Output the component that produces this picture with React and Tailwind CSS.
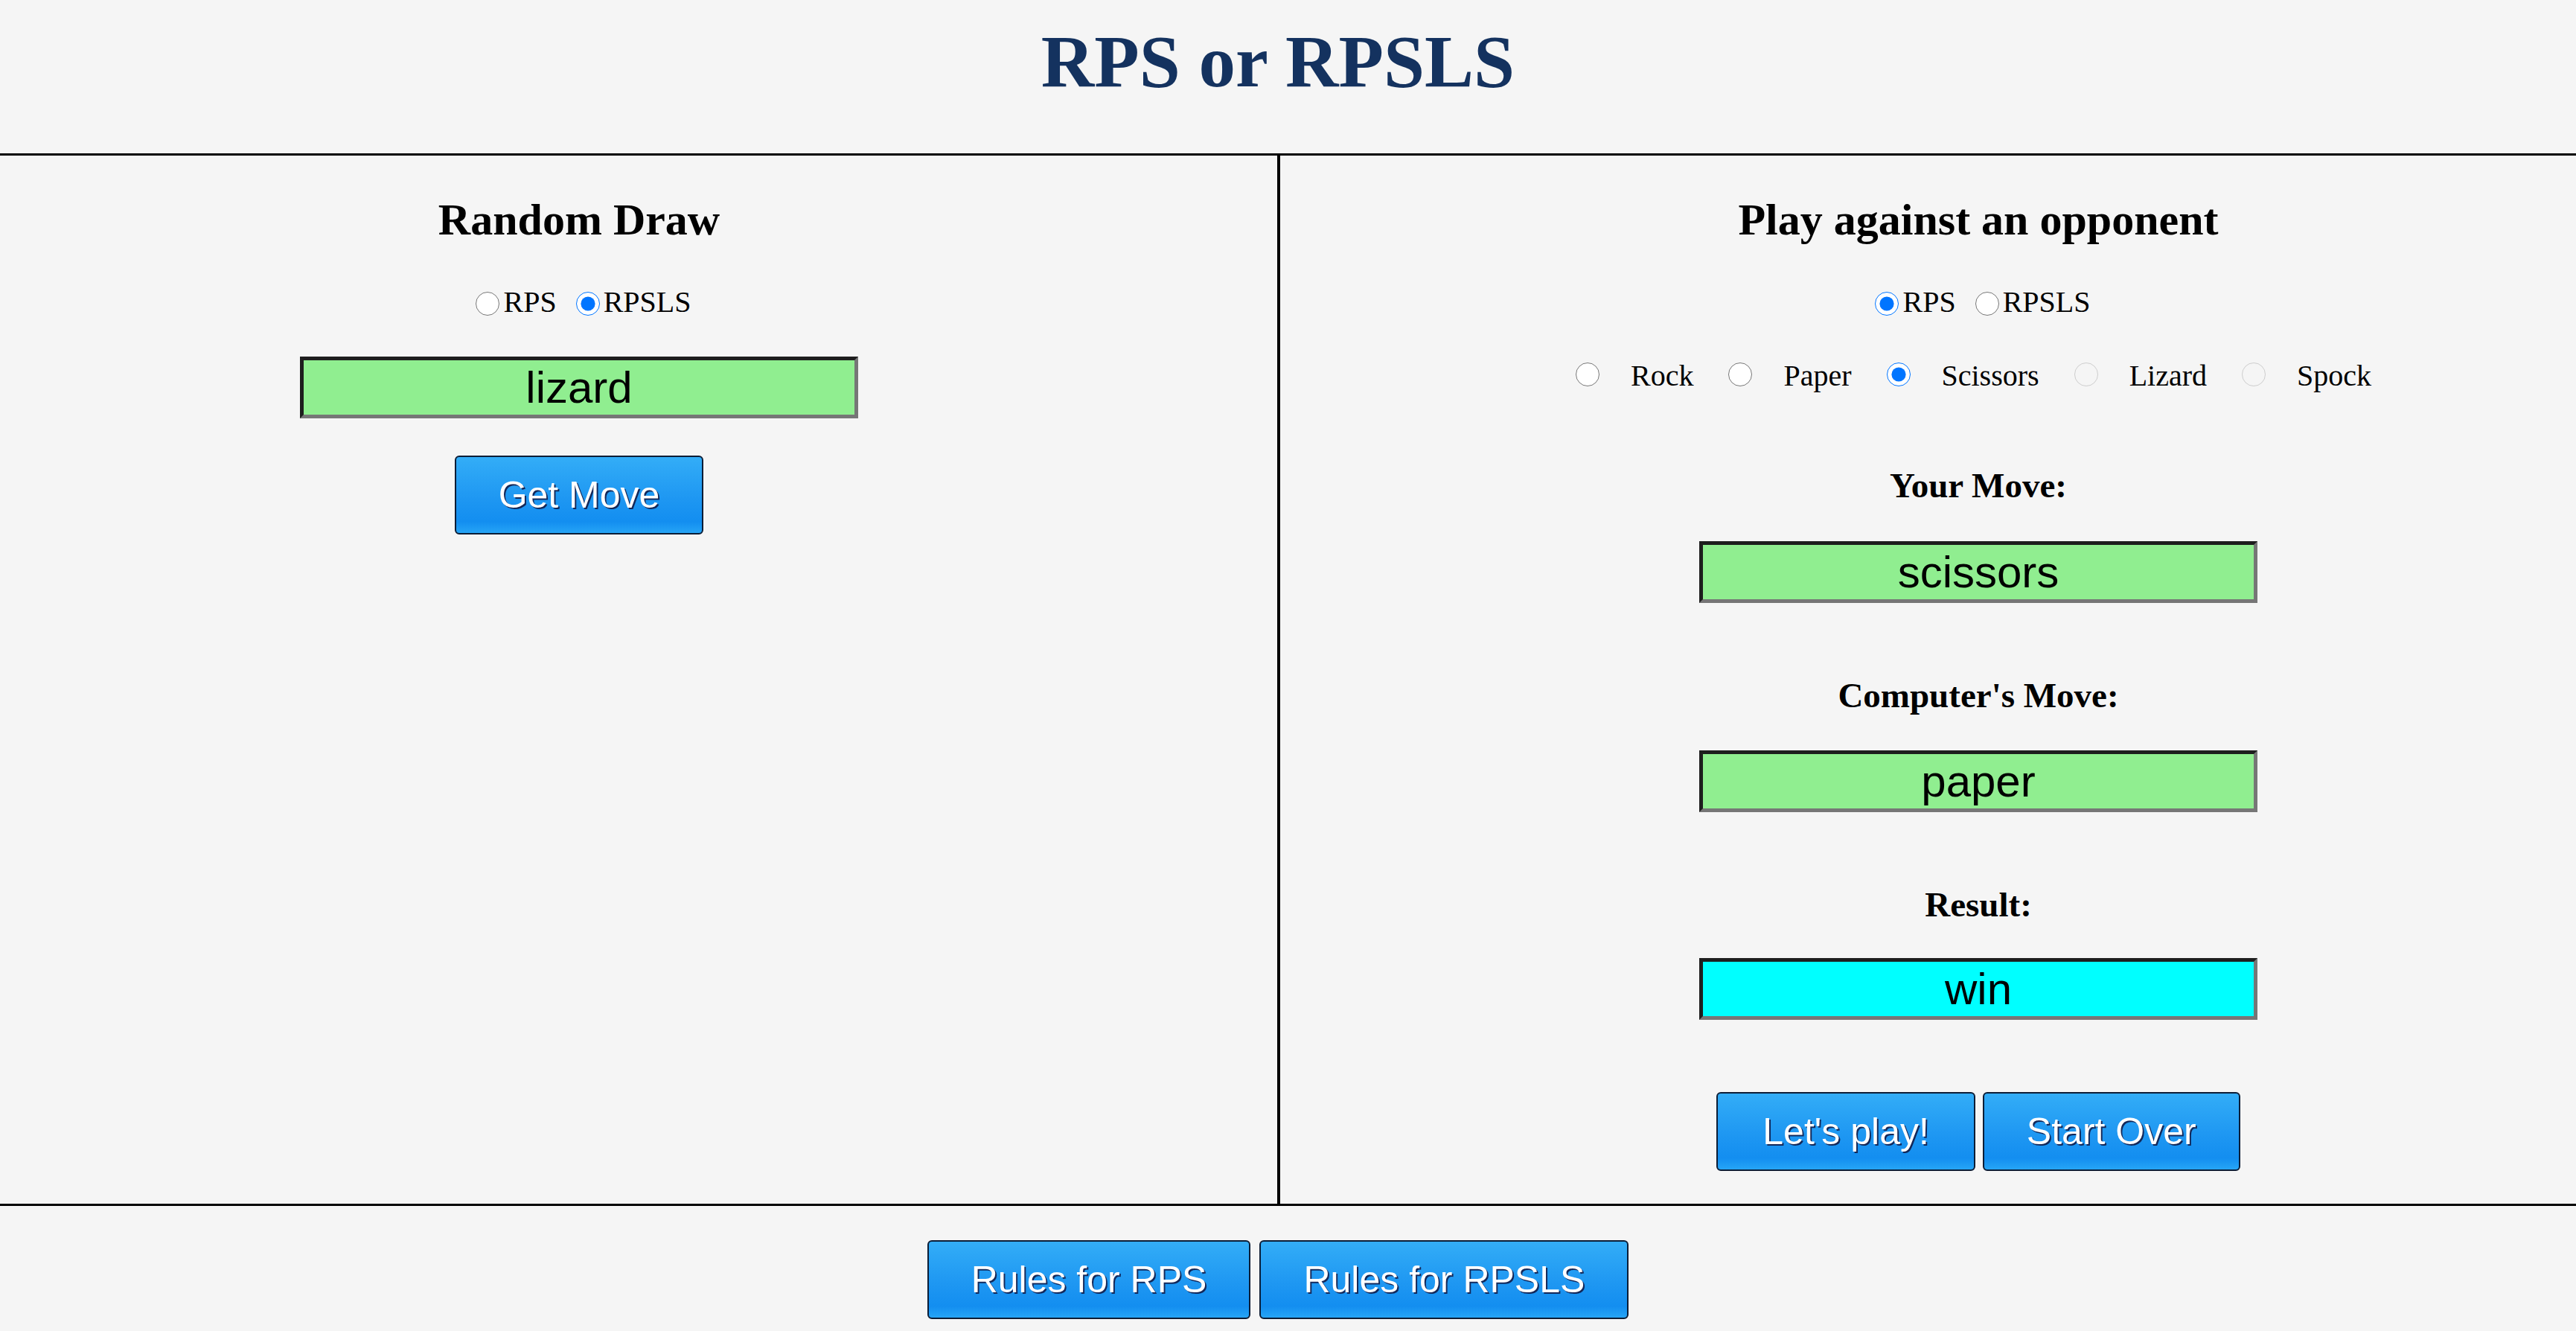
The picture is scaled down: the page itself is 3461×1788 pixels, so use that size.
import React from "react";

const SERIF = "font-['Liberation_Serif','Times_New_Roman',serif]";
const SANS = "font-['Liberation_Sans',Arial,sans-serif]";

function Radio({ name, checked, disabled, className = "" }) {
  return (
    <input
      type="radio"
      name={name}
      defaultChecked={checked}
      disabled={disabled}
      className={"w-[32px] h-[32px] shrink-0 " + className}
    />
  );
}

function Box({ children, bg = "bg-[#90ee90]", className = "" }) {
  return (
    <div
      className={
        "mx-auto w-[750px] h-[83px] border-[5px] border-t-[#1e1e1e] border-l-[#1e1e1e] border-b-[#767676] border-r-[#767676] flex items-center justify-center text-[60px] leading-[69px] text-black " +
        SANS +
        " " +
        bg +
        " " +
        className
      }
    >
      {children}
    </div>
  );
}

function Btn({ children, className = "px-[57px]" }) {
  return (
    <button
      type="button"
      className={
        "h-[106px] border-2 border-[#0c1d36] rounded-[6px] bg-[linear-gradient(to_bottom,#33adf7_0%,#1e97f2_55%,#138ef0_85%,#26a5f6_100%)] text-white text-[50px] leading-[58px] [text-shadow:2px_2px_0_#13285a] " +
        SANS +
        " " +
        className
      }
    >
      {children}
    </button>
  );
}

export default function App() {
  const moves = [
    { label: "Rock" },
    { label: "Paper" },
    { label: "Scissors", checked: true },
    { label: "Lizard", disabled: true },
    { label: "Spock", disabled: true },
  ];

  return (
    <div className={"min-h-screen bg-[#f5f5f5] text-black " + SERIF}>
      <header className="h-[209px] border-b-[3px] border-black pt-[33px] pr-[27px] text-center">
        <h1 className="text-[99px] leading-[99px] font-bold text-[#14325f]">RPS or RPSLS</h1>
      </header>

      <main className="grid grid-cols-[1720px_1fr] h-[1408px]">
        <section className="border-r-[4px] border-black pr-[160px] text-center">
          <h2 className="mt-[56px] text-[60px] leading-[60px] font-bold">Random Draw</h2>
          <div className="mt-[61px] flex justify-center items-start text-[40px] leading-[40px] pl-[12px]">
            <Radio name="draw" className="mt-[6px] mr-[5px]" />
            <span>RPS</span>
            <Radio name="draw" checked className="mt-[6px] ml-[26px] mr-[5px]" />
            <span>RPSLS</span>
          </div>
          <Box className="mt-[53px]">lizard</Box>
          <div className="mt-[50px] flex justify-center">
            <Btn>Get Move</Btn>
          </div>
        </section>

        <section className="pl-[135px] text-center">
          <h2 className="mt-[56px] text-[60px] leading-[60px] font-bold">Play against an opponent</h2>
          <div className="mt-[61px] flex justify-center items-start text-[40px] leading-[40px] pl-[12px]">
            <Radio name="mode" checked className="mt-[6px] mr-[5px]" />
            <span>RPS</span>
            <Radio name="mode" className="mt-[6px] ml-[26px] mr-[5px]" />
            <span>RPSLS</span>
          </div>
          <div className="mt-[59px] flex justify-center items-start gap-[47px] text-[40px] leading-[40px] pr-[13px]">
            {moves.map((m) => (
              <div key={m.label} className="flex items-start">
                <Radio
                  name="move"
                  checked={m.checked}
                  disabled={m.disabled}
                  className="mt-[2px] mr-[42px]"
                />
                <span>{m.label}</span>
              </div>
            ))}
          </div>

          <h3 className="mt-[104px] text-[47px] leading-[47px] font-bold">Your Move:</h3>
          <Box className="mt-[51px]">scissors</Box>

          <h3 className="mt-[101px] text-[47px] leading-[47px] font-bold">Computer's Move:</h3>
          <Box className="mt-[50px]">paper</Box>

          <h3 className="mt-[101px] text-[47px] leading-[47px] font-bold">Result:</h3>
          <Box className="mt-[48px]" bg="bg-[#00ffff]">win</Box>

          <div className="mt-[97px] flex justify-center gap-[10px]">
            <Btn className="px-[60px]">Let's play!</Btn>
            <Btn>Start Over</Btn>
          </div>
        </section>
      </main>

      <footer className="border-t-[3px] border-black pt-[46px] pr-[27px] flex justify-center gap-[12px]">
        <Btn>Rules for RPS</Btn>
        <Btn>Rules for RPSLS</Btn>
      </footer>
    </div>
  );
}
